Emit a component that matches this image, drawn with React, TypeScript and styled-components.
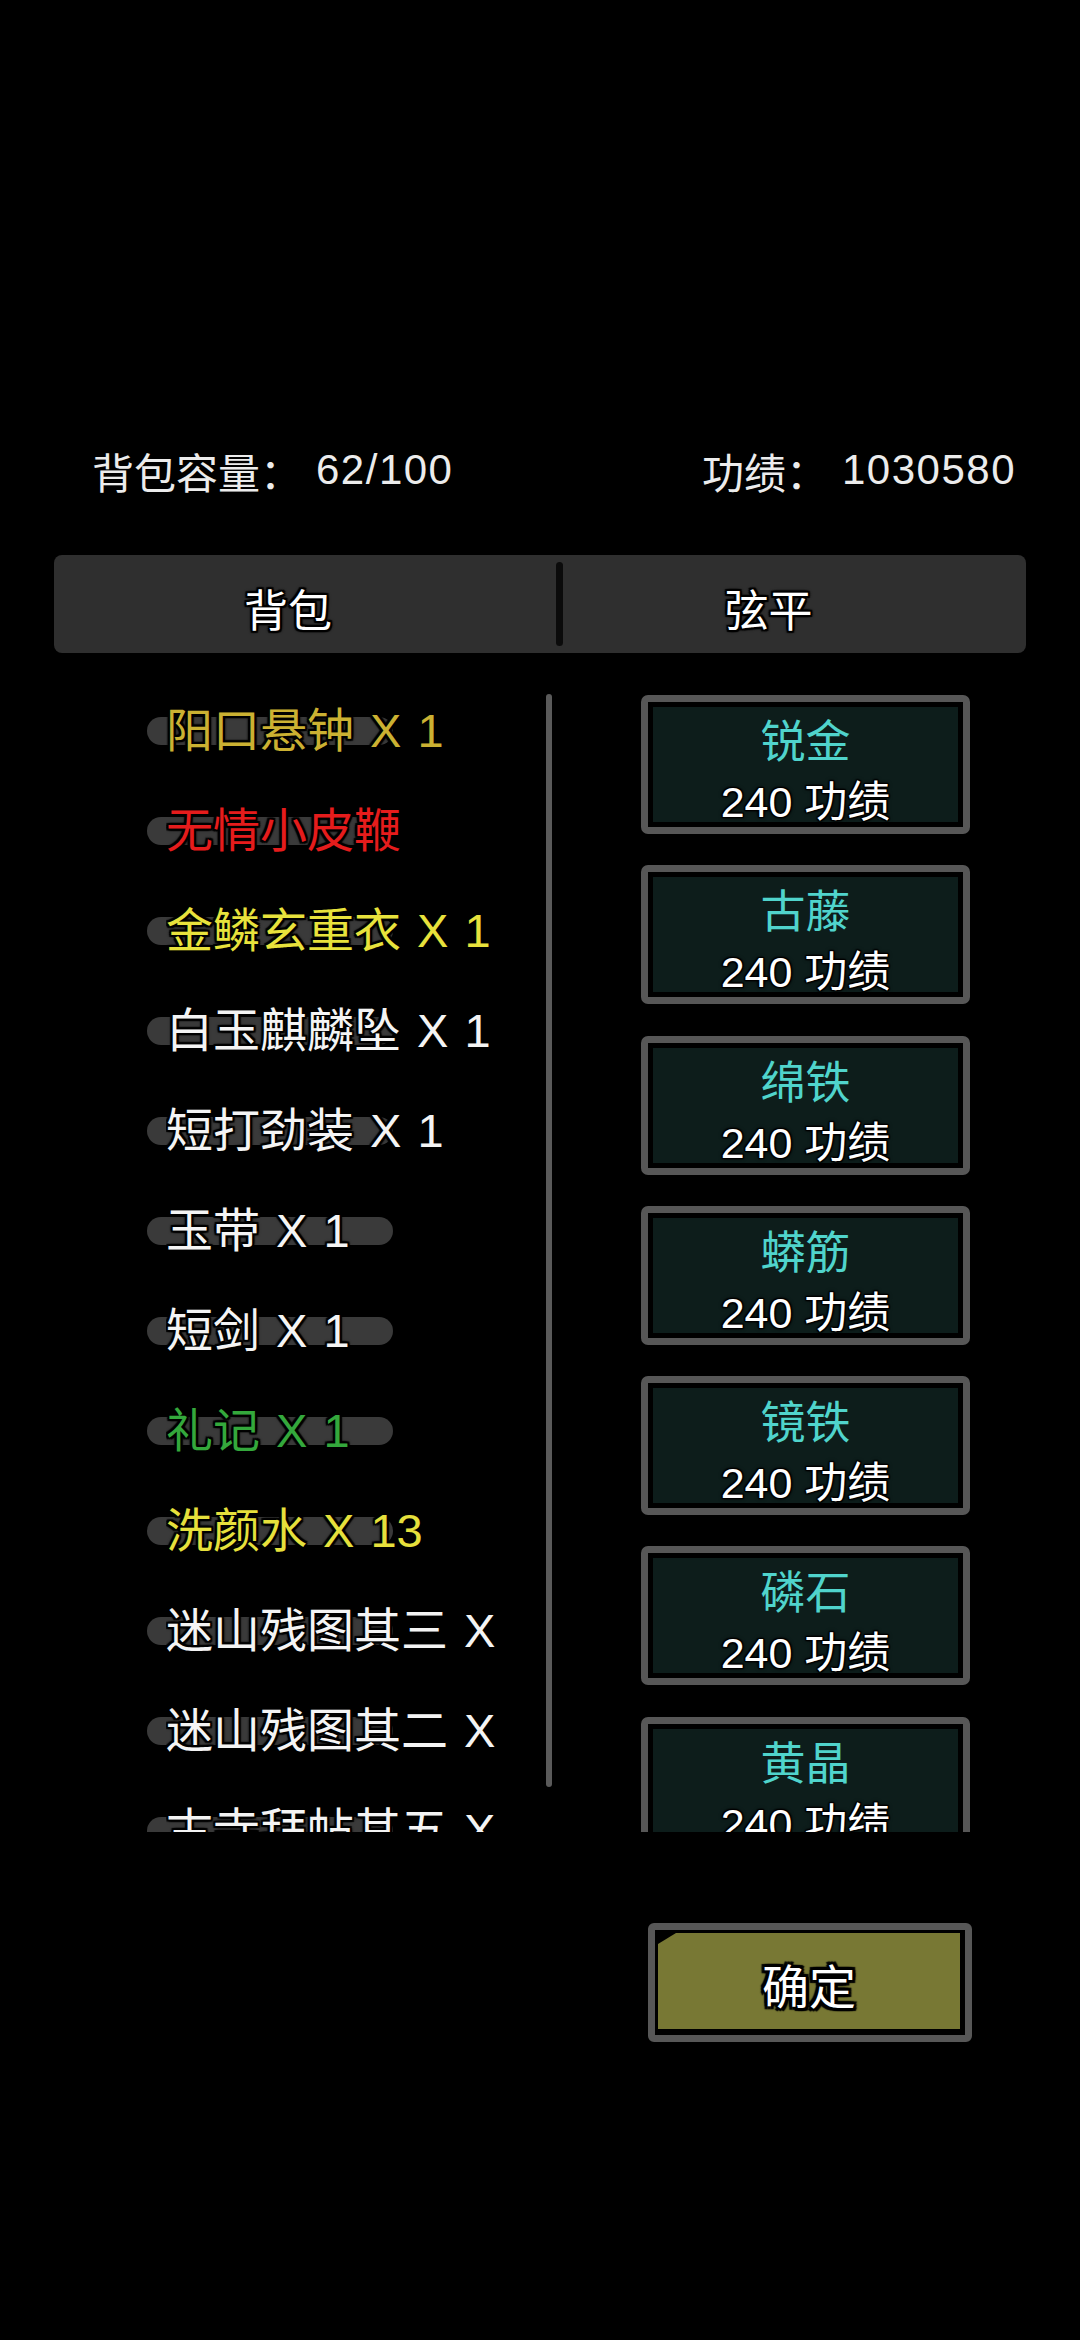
import React from "react";
import styled, { createGlobalStyle } from "styled-components";

const GlobalStyle = createGlobalStyle`
  html, body {
    margin: 0;
    padding: 0;
    background: #000;
  }
  body {
    font-family: "Liberation Sans", "Noto Sans CJK SC", sans-serif;
  }
  #root {
    width: 1080px;
  }
`;

const outline = (w: number) => `
  text-shadow:
    -${w}px -${w}px 1px #000, ${w}px -${w}px 1px #000,
    -${w}px ${w}px 1px #000, ${w}px ${w}px 1px #000,
    0 -${w}px 1px #000, 0 ${w}px 1px #000,
    -${w}px 0 1px #000, ${w}px 0 1px #000,
    0 0 4px #000;
`;

const Page = styled.div`
  width: 1080px;
  height: 2340px;
  box-sizing: border-box;
  padding-top: 440px;
  background: #000;
  display: flex;
  flex-direction: column;
  overflow: hidden;
`;

const Header = styled.div`
  height: 60px;
  display: flex;
  align-items: center;
  justify-content: space-between;
  padding: 0 64px 0 92px;
  font-size: 42px;
  color: #ececec;
`;

const Stat = styled.div`
  display: flex;
  align-items: center;
  white-space: nowrap;
`;

const StatValue = styled.span`
  margin-left: 14px;
  letter-spacing: 1.5px;
`;

const Tabs = styled.div`
  margin: 55px 54px 0;
  height: 98px;
  background: #2f2f2f;
  border-radius: 8px;
  display: grid;
  grid-template-columns: 502px 7px 1fr;
  align-items: center;
`;

const Tab = styled.div<{ $pr: number }>`
  height: 100%;
  display: flex;
  align-items: center;
  justify-content: center;
  padding: 8px ${(p) => p.$pr}px 0 0;
  box-sizing: border-box;
  font-size: 44px;
  color: #fff;
  ${outline(2)}
`;

const TabDivider = styled.div`
  width: 7px;
  height: 84px;
  border-radius: 4px;
  background: #0b0b0b;
`;

const Content = styled.div`
  margin-top: 28px;
  height: 1151px;
  display: flex;
  align-items: flex-start;
`;

const BagList = styled.div`
  width: 546px;
  height: 100%;
  box-sizing: border-box;
  padding-left: 147px;
  overflow: hidden;
  display: flex;
  flex-direction: column;
`;

const BagItem = styled.div`
  height: 100px;
  flex: none;
  display: grid;
  align-items: center;
`;

const Pill = styled.div`
  grid-area: 1 / 1;
  width: 246px;
  height: 28px;
  border-radius: 14px;
  background: #3a3a3a;
`;

const ItemLabel = styled.div<{ $color: string }>`
  grid-area: 1 / 1;
  margin-left: 19px;
  width: 341px;
  overflow: hidden;
  white-space: nowrap;
  font-size: 47px;
  word-spacing: 3px;
  line-height: 100px;
  color: ${(p) => p.$color};
  ${outline(2)}
`;

const ScrollBar = styled.div`
  flex: none;
  width: 6px;
  height: 1093px;
  margin-top: 13px;
  border-radius: 3px;
  background: #5a5a5a;
`;

const ShopList = styled.div`
  margin-left: 89px;
  width: 329px;
  height: 100%;
  box-sizing: border-box;
  padding-top: 14px;
  overflow: hidden;
  display: flex;
  flex-direction: column;
  gap: 31.3px;
`;

const ShopButton = styled.div`
  flex: none;
  height: 139px;
  box-sizing: border-box;
  border: 7px solid #575757;
  border-radius: 7px;
  background: #000;
  padding: 5px;
`;

const ShopFill = styled.div`
  height: 100%;
  background: #0d1d1b;
  display: flex;
  flex-direction: column;
  align-items: center;
`;

const ShopTitle = styled.div`
  height: 72px;
  line-height: 72px;
  font-size: 45px;
  color: #50d4cc;
`;

const ShopPrice = styled.div`
  line-height: 46px;
  font-size: 43px;
  color: #fff;
  white-space: nowrap;
  ${outline(1)}
`;

const Footer = styled.div`
  margin-top: 91px;
  display: flex;
  justify-content: flex-end;
  padding-right: 108px;
`;

const ConfirmButton = styled.div`
  width: 324px;
  height: 119px;
  box-sizing: border-box;
  border: 7px solid #575757;
  border-radius: 6px;
  background: #000;
  padding: 3px 5px 6px 3px;
`;

const ConfirmFill = styled.div`
  height: 100%;
  background: #787834;
  clip-path: polygon(0 11px, 18px 0, 100% 0, 100% 100%, 0 100%);
  display: flex;
  align-items: center;
  justify-content: center;
  padding-top: 4px;
  box-sizing: border-box;
  font-size: 47px;
  font-weight: 400;
  color: #fff;
  ${outline(3)}
`;

const bagItems: { name: string; color: string }[] = [
  { name: "阳口悬钟 X 1", color: "#cbb132" },
  { name: "无情小皮鞭", color: "#e51c1c" },
  { name: "金鳞玄重衣 X 1", color: "#e8e23c" },
  { name: "白玉麒麟坠 X 1", color: "#f4f4f4" },
  { name: "短打劲装 X 1", color: "#f4f4f4" },
  { name: "玉带 X 1", color: "#f4f4f4" },
  { name: "短剑 X 1", color: "#f4f4f4" },
  { name: "礼记 X 1", color: "#34a83c" },
  { name: "洗颜水 X 13", color: "#e6e03c" },
  { name: "迷山残图其三 X 1", color: "#f4f4f4" },
  { name: "迷山残图其二 X 1", color: "#f4f4f4" },
  { name: "古寺拜帖其五 X 1", color: "#f4f4f4" },
];

const shopItems = ["锐金", "古藤", "绵铁", "蟒筋", "镜铁", "磷石", "黄晶"];

export default function App() {
  return (
    <>
      <GlobalStyle />
      <Page>
        <Header>
          <Stat>
            背包容量：<StatValue>62/100</StatValue>
          </Stat>
          <Stat>
            功绩：<StatValue>1030580</StatValue>
          </Stat>
        </Header>
        <Tabs>
          <Tab $pr={34}>背包</Tab>
          <TabDivider />
          <Tab $pr={52}>弦平</Tab>
        </Tabs>
        <Content>
          <BagList>
            {bagItems.map((it) => (
              <BagItem key={it.name}>
                <Pill />
                <ItemLabel $color={it.color}>{it.name}</ItemLabel>
              </BagItem>
            ))}
          </BagList>
          <ScrollBar />
          <ShopList>
            {shopItems.map((s) => (
              <ShopButton key={s}>
                <ShopFill>
                  <ShopTitle>{s}</ShopTitle>
                  <ShopPrice>240 功绩</ShopPrice>
                </ShopFill>
              </ShopButton>
            ))}
          </ShopList>
        </Content>
        <Footer>
          <ConfirmButton>
            <ConfirmFill>确定</ConfirmFill>
          </ConfirmButton>
        </Footer>
      </Page>
    </>
  );
}
